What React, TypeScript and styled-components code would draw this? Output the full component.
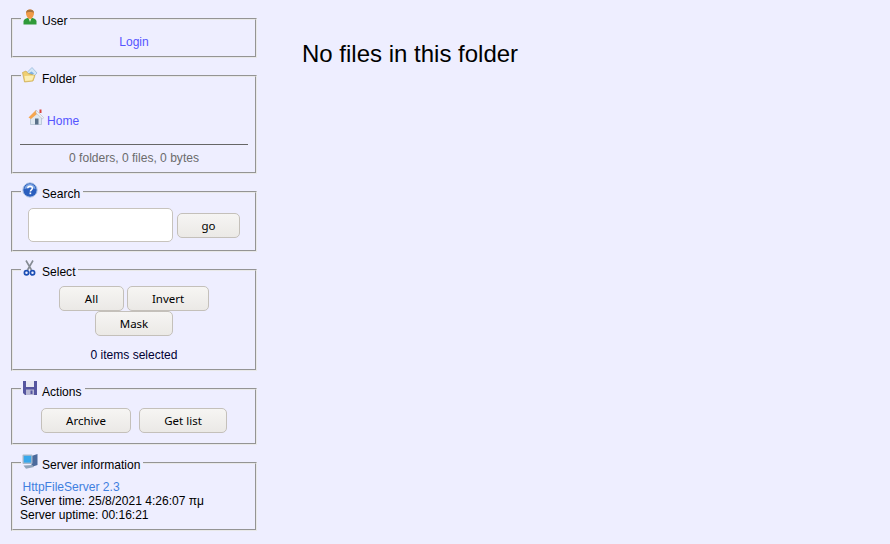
import React from "react";
import styled, { createGlobalStyle } from "styled-components";

const GlobalStyle = createGlobalStyle`
  html, body {
    margin: 0;
    padding: 0;
    background: #eeeeff;
    height: 100%;
  }
  body {
    font-family: "Liberation Sans", Arial, sans-serif;
    font-size: 12.05px;
    color: #000;
    overflow: hidden;
  }
`;

const Page = styled.div`
  display: flex;
  align-items: flex-start;
  height: 544px;
`;

const Sidebar = styled.div`
  width: 246px;
  margin-left: 11px;
  padding-top: 10px;
  display: flex;
  flex-direction: column;
  gap: 9px;
`;

const Main = styled.div`
  margin-left: 45px;
  padding-top: 40px;
`;

const Heading = styled.h2`
  margin: 0;
  font-size: 24px;
  line-height: 28px;
  font-weight: 400;
`;

const Panel = styled.fieldset<{ $height: number }>`
  margin: 0;
  padding: 0 7px;
  min-width: 0;
  border: 2px groove #e8e8e8;
  height: ${(p) => p.$height}px;
  box-sizing: border-box;
`;

const Legend = styled.legend<{ $drop?: boolean }>`
  padding: ${(p) => (p.$drop ? "1px" : "0")} 3px 0 1px;
  margin-left: 1px;
  line-height: 16px;
  display: flex;
  align-items: flex-end;
  height: 18px;
  box-sizing: border-box;
  gap: 4px;
  & > * {
    transform: translateY(${(p) => (p.$drop ? "1px" : "0")});
  }
`;

const LegendIcon = styled.svg`
  width: 16px;
  height: 16px;
  display: block;
  position: relative;
  top: -3px;
  flex: none;
`;

const LegendText = styled.span`
  display: block;
  position: relative;
  top: 1px;
`;

const LinkText = styled.a`
  color: #5555ff;
  text-decoration: none;
`;

const Centered = styled.div`
  text-align: center;
`;

const LoginRow = styled(Centered)`
  padding-top: 7px;
`;

const HomeRow = styled.div`
  display: flex;
  align-items: flex-end;
  gap: 3px;
  padding: 23px 0 0 8px;
  height: 20px;
`;

const Divider = styled.hr`
  margin: 16px 0 0;
  border: none;
  border-top: 1px solid #666;
  height: 0;
`;

const Muted = styled(Centered)`
  color: #6c6c6c;
  padding-top: 6px;
`;

const SearchRow = styled.div`
  display: flex;
  align-items: center;
  gap: 4px;
  padding: 7px 0 0 8px;
`;

const SearchInput = styled.input`
  width: 145px;
  height: 34px;
  box-sizing: border-box;
  border: 1px solid #c7c3bd;
  border-radius: 5px;
  background: #fff;
  padding: 0 4px;
  outline: none;
`;

const Button = styled.button<{ $width: number }>`
  height: 25px;
  width: ${(p) => p.$width}px;
  box-sizing: border-box;
  border: 1px solid #c4c0ba;
  border-radius: 5px;
  background: linear-gradient(#f6f5f3, #ebe9e6);
  font-family: "Noto Sans", sans-serif;
  font-size: 11.5px;
  color: #000;
  padding: 0;
  margin: 0;
`;

const ButtonRow = styled.div<{ $gap: number }>`
  display: flex;
  justify-content: center;
  gap: ${(p) => p.$gap}px;
`;

const SelectButtons = styled.div`
  display: flex;
  flex-direction: column;
  padding-top: 7px;
`;

const SelectedCount = styled(Centered)`
  color: #000033;
  padding-top: 12px;
`;

const ActionRow = styled(ButtonRow)`
  padding-top: 10px;
`;

const ServerInfo = styled.div`
  padding-top: 8px;
  line-height: 14px;
`;

const ServerLink = styled.a`
  display: block;
  margin-left: 2.5px;
  color: #3f7fe0;
  text-decoration: none;
`;

const UserIcon = () => (
  <LegendIcon viewBox="0 0 16 16">
    <path d="M1.500 15.500v-3c0-2 2-3 4-3.500h5c2 .5 4 1.500 4 3.500v3z" fill="#2f9a3a" />
    <path d="M6.500 9h3l-1.500 4z" fill="#eaf5e4" />
    <path d="M4 4C4 1.500 5.800.5 8 .5s4 1 4 3.500-1.800 6-4 6-4-3.500-4-6z" fill="#f09a48" />
    <path d="M4 4C4.300 1.400 5.800.5 8 .5s3.700.9 4 3.500C10.500 2.800 5.500 2.800 4 4z" fill="#a9743f" />
  </LegendIcon>
);

const FolderIcon = () => (
  <LegendIcon viewBox="0 0 16 16">
    <path d="M4 6.500L10 .5l5 5.500-5 5z" fill="#d3e6f8" stroke="#8fb4d8" strokeWidth=".7" />
    <path d="M6.500 6.500l3-2 2.500 2-2.500 2z" fill="#7fb0e0" />
    <path d="M.5 5.500L4 4l2 2.500 7 2-2 5.500-8.500 1z" fill="#f0cf72" stroke="#c9a94e" strokeWidth=".7" />
    <path d="M2.500 9l9.500-.5-1.800 4.800-7 .8z" fill="#fbeeb4" />
  </LegendIcon>
);

const HomeIcon = () => (
  <LegendIcon viewBox="0 0 16 16">
    <path d="M2.500 8l5.500-5 5.500 5v7.500h-11z" fill="#dfe8f1" stroke="#a3b5c6" strokeWidth=".6" />
    <path d="M.5 8.500L8 1l1.500 3.500L3 10z" fill="#f5a650" />
    <path d="M8 1l7.500 7.500-1 1.500L8 4z" fill="#f2f2f2" stroke="#a8b4c0" strokeWidth=".5" />
    <rect x="7" y="9.500" width="3.500" height="6" fill="#5a7189" />
    <rect x="11.500" y=".5" width="2" height="3.500" fill="#d8453a" />
  </LegendIcon>
);

const HelpIcon = () => (
  <LegendIcon viewBox="0 0 16 16">
    <circle cx="8" cy="8" r="7.200" fill="#2b5fbe" stroke="#b4c8e6" strokeWidth="1" />
    <path d="M2.500 7a5.500 5 0 0 1 11 0c-3-1.500-8-1.500-11 0z" fill="#7fa6e4" />
    <path d="M5.800 6.200C5.800 4.800 7 4.200 8.100 4.200c1.400 0 2.300.8 2.300 1.900 0 1.700-2 1.700-2 3.300" fill="none" stroke="#fff" strokeWidth="1.500" />
    <rect x="7.500" y="10.500" width="1.700" height="1.700" fill="#fff" />
  </LegendIcon>
);

const ScissorsIcon = () => (
  <LegendIcon viewBox="0 0 16 16">
    <path d="M4 .5l5.500 9.500M11 .5L5.500 10" stroke="#858b93" strokeWidth="1.600" fill="none" />
    <circle cx="4.500" cy="12.800" r="2.100" fill="none" stroke="#1c4fb4" strokeWidth="1.700" />
    <circle cx="10.500" cy="12.800" r="2.100" fill="none" stroke="#1c4fb4" strokeWidth="1.700" />
  </LegendIcon>
);

const SaveIcon = () => (
  <LegendIcon viewBox="0 0 16 16">
    <path d="M1 1h14v14H3l-2-2z" fill="#55559f" />
    <rect x="4" y="1" width="8" height="6" fill="#e8e8f2" />
    <rect x="4" y="9.500" width="8" height="5.500" fill="#b8b8d4" />
    <rect x="8.500" y="10.500" width="2" height="3.500" fill="#55559f" />
  </LegendIcon>
);

const ServerIcon = () => (
  <LegendIcon viewBox="0 0 16 16">
    <path d="M9.500 3L15.500 1v11l-6 2z" fill="#4b6a9c" />
    <rect x=".5" y="1.500" width="10" height="9.500" rx="1" fill="#a9b8c9" />
    <rect x="1.800" y="2.800" width="7.400" height="6.800" fill="#38a8ec" />
    <path d="M1.500 12.500l9-.5 1.500 2-8 1.800z" fill="#8fa3ba" />
  </LegendIcon>
);

export default function App() {
  return (
    <>
      <GlobalStyle />
      <Page>
        <Sidebar>
          <Panel $height={48}>
            <Legend>
              <UserIcon />
              <LegendText>User</LegendText>
            </Legend>
            <LoginRow>
              <LinkText href="#">Login</LinkText>
            </LoginRow>
          </Panel>

          <Panel $height={107}>
            <Legend $drop>
              <FolderIcon />
              <LegendText>Folder</LegendText>
            </Legend>
            <HomeRow>
              <HomeIcon />
              <LinkText href="#">Home</LinkText>
            </HomeRow>
            <Divider />
            <Muted>0 folders, 0 files, 0 bytes</Muted>
          </Panel>

          <Panel $height={69}>
            <Legend>
              <HelpIcon />
              <LegendText>Search</LegendText>
            </Legend>
            <SearchRow>
              <SearchInput />
              <Button $width={63}>go</Button>
            </SearchRow>
          </Panel>

          <Panel $height={110}>
            <Legend>
              <ScissorsIcon />
              <LegendText>Select</LegendText>
            </Legend>
            <SelectButtons>
              <ButtonRow $gap={3}>
                <Button $width={65}>All</Button>
                <Button $width={82}>Invert</Button>
              </ButtonRow>
              <ButtonRow $gap={0}>
                <Button $width={78}>Mask</Button>
              </ButtonRow>
            </SelectButtons>
            <SelectedCount>0 items selected</SelectedCount>
          </Panel>

          <Panel $height={65}>
            <Legend $drop>
              <SaveIcon />
              <LegendText>Actions</LegendText>
            </Legend>
            <ActionRow $gap={8}>
              <Button $width={90}>Archive</Button>
              <Button $width={88}>Get list</Button>
            </ActionRow>
          </Panel>

          <Panel $height={77}>
            <Legend>
              <ServerIcon />
              <LegendText>Server information</LegendText>
            </Legend>
            <ServerInfo>
              <ServerLink href="#">HttpFileServer 2.3</ServerLink>
              <div>Server time: 25/8/2021 4:26:07 πμ</div>
              <div>Server uptime: 00:16:21</div>
            </ServerInfo>
          </Panel>
        </Sidebar>
        <Main>
          <Heading>No files in this folder</Heading>
        </Main>
      </Page>
    </>
  );
}
